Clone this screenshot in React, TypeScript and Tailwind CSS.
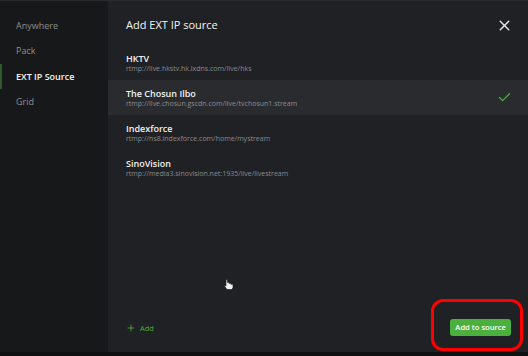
import { Check, X, Plus } from "lucide-react";

const sources = [
  { name: "HKTV", url: "rtmp://live.hkstv.hk.lxdns.com/live/hks", selected: false },
  { name: "The Chosun Ilbo", url: "rtmp://live.chosun.gscdn.com/live/tvchosun1.stream", selected: true },
  { name: "Indexforce", url: "rtmp://ns8.indexforce.com/home/mystream", selected: false },
  { name: "SinoVision", url: "rtmp://media3.sinovision.net:1935/live/livestream", selected: false },
];

const menu = ["Anywhere", "Pack", "EXT IP Source", "Grid"];

const Sidebar = () => {
  return (
    <aside className="w-[108px] shrink-0 bg-[#17181a] pt-[12px]">
      <ul>
        {menu.map((item) => {
          const active = item === "EXT IP Source";
          return (
            <li
              key={item}
              className={
                active
                  ? "flex h-[25.4px] items-center border-l-2 border-[#2f5a2c] pl-[14px] text-[9px] font-semibold text-[#f4f4f4]"
                  : "flex h-[25.4px] items-center pl-4 text-[9px] font-medium text-[#8e8f92]"
              }
            >
              {item}
            </li>
          );
        })}
      </ul>
    </aside>
  );
};

const Cursor = () => (
  <svg width="10" height="12" viewBox="0 0 10 12" className="absolute left-[224px] top-[279px]">
    <path
      d="M2 1 v6 l-1 -1 l-0.5 1 l2.5 3.5 h5 l1 -2 v-3 l-1 -0.5 l-1 0.5 v-1 l-1 -0.5 l-1 0.5 v-1 l-1 -0.3 l-0.5 0.3 v-3 z"
      fill="#f2f2f2"
      stroke="#111"
      strokeWidth="0.6"
    />
  </svg>
);

export default function App() {
  return (
    <div
      className="relative flex h-[356px] w-[528px] flex-col overflow-hidden bg-[#0f1012]"
      style={{ fontFamily: '"Open Sans", "Noto Sans", sans-serif' }}
    >
      <div className="flex h-[352px] border-t border-[#2a2b2d]">
        <Sidebar />
        <main className="flex flex-1 flex-col bg-[#202124]">
          <div className="flex h-[44px] items-start justify-between pl-[18px] pr-[15px] pt-[16px]">
            <h1 className="text-[11px] font-medium leading-[15px] text-[#f4f4f4]">Add EXT IP source</h1>
            <X size={17} strokeWidth={2} className="-mt-[0.5px] text-[#e8e8e8]" />
          </div>
          <ul>
            {sources.map((s) => (
              <li
                key={s.name}
                className={
                  s.selected
                    ? "flex h-[35px] items-center justify-between bg-[#2a2b2e] pl-[18px] pr-[16px]"
                    : "flex h-[35px] items-center justify-between pl-[18px] pr-[16px]"
                }
              >
                <div className="flex flex-col">
                  <span className="text-[9px] font-semibold leading-[11px] text-[#f2f2f2]">{s.name}</span>
                  <span className="text-[7px] leading-[9px] text-[#8a8b8f]">{s.url}</span>
                </div>
                {s.selected && <Check size={15} strokeWidth={2} className="text-[#4caf3f]" />}
              </li>
            ))}
          </ul>
          <div className="mt-auto flex items-center justify-between pb-[16px] pl-[18px] pr-[17px]">
            <button className="flex items-center gap-[4px] text-[7.5px] font-medium leading-[10px] text-[#4caf3f]">
              <Plus size={10} strokeWidth={2} />
              Add
            </button>
            <button className="h-[17px] rounded-[3px] bg-[#4bb03e] px-[5px] text-[7.6px] font-semibold leading-[17px] text-white">
              Add to source
            </button>
          </div>
        </main>
      </div>
      <div className="absolute left-[431px] top-[299px] h-[52px] w-[92px] rounded-[12px] border-[3px] border-[#ff0000]" />
      <Cursor />
    </div>
  );
}
